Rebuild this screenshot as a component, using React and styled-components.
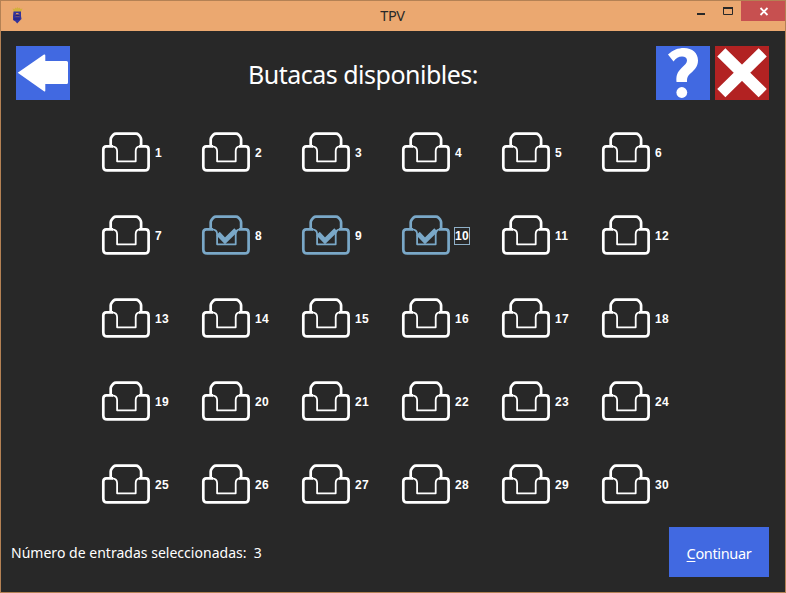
import React from 'react';
import styled, { createGlobalStyle } from 'styled-components';

const Global = createGlobalStyle`
  * { box-sizing: border-box; }
  body { margin: 0; background: #282828; }
`;

const Window = styled.div`
  width: 786px;
  height: 593px;
  display: flex;
  flex-direction: column;
  background: #282828;
  border: 1px solid #b48154;
  overflow: hidden;
  color: #fff;
  font-family: "Noto Sans", sans-serif;
`;

const TitleBar = styled.div`
  height: 30px;
  flex: none;
  display: grid;
  grid-template-columns: 100px 1fr 101px;
  background: #eba870;
  color: #282828;
`;

const CrestSlot = styled.div`
  padding: 6px 0 0 10px;
  svg { display: block; }
`;

const WindowTitle = styled.div`
  text-align: center;
  font-size: 14.5px;
  line-height: 29px;
  letter-spacing: -0.4px;
`;

const WindowControls = styled.div`
  display: flex;
  justify-content: flex-end;
`;

const WindowButton = styled.div`
  width: ${(p) => p.$w}px;
  height: 20px;
  background: ${(p) => (p.$close ? '#c75050' : 'transparent')};
  svg { display: block; }
`;

const Header = styled.header`
  height: 84px;
  flex: none;
  display: flex;
  align-items: flex-start;
  padding: 15px 16px 0 15px;
`;

const Heading = styled.h1`
  flex: 1;
  margin: 0;
  text-align: center;
  font-size: 25px;
  font-weight: 400;
  line-height: 56px;
  white-space: nowrap;
  letter-spacing: -0.5px;
`;

const IconButton = styled.button`
  width: 54px;
  height: 54px;
  padding: 0;
  border: 0;
  margin-left: ${(p) => p.$gap || 0}px;
  background: ${(p) => (p.$danger ? '#b22222' : '#4169e1')};
  svg { display: block; }
`;

const SeatGrid = styled.main`
  display: grid;
  grid-template-columns: repeat(6, 100px);
  grid-auto-rows: 83px;
  padding: 16px 0 0 100px;
  height: 411px;
  flex: none;
`;

const Seat = styled.div`
  display: flex;
  align-items: flex-start;
  color: ${(p) => (p.$selected ? '#7aa8c8' : '#fff')};
  svg { display: block; flex: none; }
`;

const SeatLabel = styled.span`
  margin: 13px 0 0 1px;
  height: 18px;
  border: 1px solid ${(p) => (p.$focused ? '#8fb0c8' : 'transparent')};
  color: #fff;
  font: bold 12px/17px "Liberation Sans", sans-serif;
  letter-spacing: 0.3px;
`;

const Footer = styled.footer`
  flex: 1;
  display: flex;
  justify-content: space-between;
  align-items: flex-start;
  padding: 1px 16px 0 10px;
`;

const Status = styled.div`
  font-size: 14px;
  line-height: 52px;
  white-space: pre;
  letter-spacing: 0.02px;
`;

const ContinueButton = styled.button`
  width: 100px;
  height: 50px;
  border: 0;
  padding: 2px 0 0;
  background: #4169e1;
  color: #fff;
  font: 14.5px "Noto Sans", sans-serif;
  letter-spacing: -0.35px;
  u { text-underline-offset: 2px; text-decoration-thickness: 1px; }
`;

const Crest = () => (
  <svg width="12" height="18" viewBox="0 0 12 18">
    <path d="M1.500 1.500l2 .5 1-1.500 1 1 1-1.500 1 1.500 1-1 1 1.500 2-.5-1.500 3.500H3z" fill="#d3b13c" />
    <path d="M2.500 4.500h7.500v4.500l.5 3L8.500 14l-2.300 2.500L4.500 14.500 2 13V9z" fill="#33339a" />
    <path d="M4.500 7h4v3h-4z" fill="#6b5078" />
    <path d="M4.500 8.500h4M3 12h6" stroke="#202080" />
    <path d="M5 6.500h2.500" stroke="#d99866" />
  </svg>
);

const SeatIcon = ({ checked }) => (
  <svg width="52" height="42" viewBox="0 0 52 42" fill="none" stroke="currentColor" strokeLinejoin="round">
    <path d="M9.700 16V8.300Q9.700 7 10.800 5.600L12.400 3.700Q13.400 2.700 15 2.700H35Q36.500 2.700 37.500 3.700L39.200 5.700Q40.100 7 40.100 8.300V16" strokeWidth="2.700" />
    <path d="M12 15.400H5.300Q2.300 15.400 2.300 18.400V35.500Q2.300 39.400 6.200 39.400H43.800Q47.600 39.400 47.600 35.500V18.400Q47.600 15.400 44.600 15.400H38" strokeWidth="2.700" />
    <path d="M11 15.400Q16.100 15.800 16.100 20V30.300H34.700V20Q34.700 15.800 39 15.400" strokeWidth="1.800" />
    {checked && <path d="M17 19.500L24 26.800L35 16" strokeWidth="4.800" strokeLinejoin="miter" />}
  </svg>
);

const SELECTED = [8, 9, 10];
const FOCUSED = 10;
const seats = Array.from({ length: 30 }, (_, i) => i + 1);

export default function App() {
  return (
    <>
      <Global />
      <Window>
        <TitleBar>
          <CrestSlot><Crest /></CrestSlot>
          <WindowTitle>TPV</WindowTitle>
          <WindowControls>
            <WindowButton $w={26}>
              <svg width="26" height="20"><path d="M1 12h8v2H1z" fill="#282828" /></svg>
            </WindowButton>
            <WindowButton $w={19}>
              <svg width="19" height="20"><path d="M1.500 6.500h9v7h-9z" fill="none" stroke="#282828" /><path d="M1 7h10" stroke="#282828" strokeWidth="2" /></svg>
            </WindowButton>
            <WindowButton $w={44} $close>
              <svg width="44" height="20"><path d="M19.500 7l7 7M26.500 7l-7 7" stroke="#fff" strokeWidth="1.800" /></svg>
            </WindowButton>
          </WindowControls>
        </TitleBar>
        <Header>
          <IconButton aria-label="Volver">
            <svg width="54" height="54"><path d="M1.700 26.700L28 8.500Q29.300 8 29.300 9.500V15H50.500Q52 15 52 16.500V36.500Q52 38 50.500 38H29.300V44.500Q29.300 46 28 45.200Z" fill="#fff" /></svg>
          </IconButton>
          <Heading>Butacas disponibles:</Heading>
          <IconButton aria-label="Ayuda">
            <svg width="54" height="54" fill="#fff">
              <path d="M12 8.500C17 4 22 2 28 2C36.500 2 42 7 42 14.500C42 20 39 23.500 35 27C31.500 30 31 31.500 31 36H20.500C20 30 21 26.500 25.500 22C29 18.700 31 17 31 14.500C31 12 29 10.500 26 10.500C22.500 10.500 20 12 17.500 15.500Z" />
              <circle cx="25.800" cy="46.500" r="5.400" />
            </svg>
          </IconButton>
          <IconButton aria-label="Cerrar" $danger $gap={5}>
            <svg width="54" height="54"><path d="M6.300 6.300L47.700 47.200M47.700 6.300L6.300 47.200" stroke="#fff" strokeWidth="11.600" /></svg>
          </IconButton>
        </Header>
        <SeatGrid>
          {seats.map((n) => (
            <Seat key={n} $selected={SELECTED.includes(n)}>
              <SeatIcon checked={SELECTED.includes(n)} />
              <SeatLabel $focused={n === FOCUSED}>{n}</SeatLabel>
            </Seat>
          ))}
        </SeatGrid>
        <Footer>
          <Status>Número de entradas seleccionadas:  {SELECTED.length}</Status>
          <ContinueButton><u>C</u>ontinuar</ContinueButton>
        </Footer>
      </Window>
    </>
  );
}
